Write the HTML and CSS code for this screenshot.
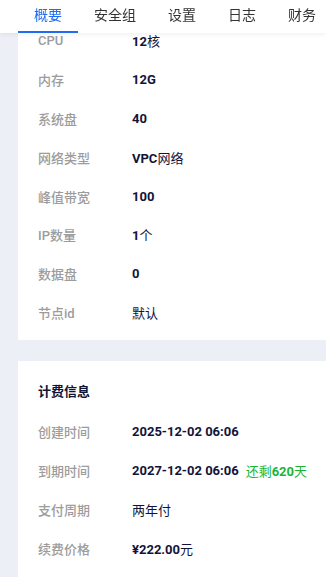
FILE: index.html
```
<!DOCTYPE html>
<html>
<head>
    <meta charset="UTF-8">
    <title>实例详情</title>
    <link rel="stylesheet" href="styles.css">
</head>
<body>
<div class="tabs">
    <a class="tab active">概要</a>
    <a class="tab">安全组</a>
    <a class="tab">设置</a>
    <a class="tab">日志</a>
    <a class="tab">财务</a>
</div>
<div class="main">
    <div class="card card-spec">
        <div class="row"><span class="label">CPU</span><span class="value">12<i>核</i></span></div>
        <div class="row"><span class="label">内存</span><span class="value">12G</span></div>
        <div class="row"><span class="label">系统盘</span><span class="value">40</span></div>
        <div class="row"><span class="label">网络类型</span><span class="value">VPC<i>网络</i></span></div>
        <div class="row"><span class="label">峰值带宽</span><span class="value">100</span></div>
        <div class="row"><span class="label">IP数量</span><span class="value">1<i>个</i></span></div>
        <div class="row"><span class="label">数据盘</span><span class="value">0</span></div>
        <div class="row"><span class="label">节点id</span><span class="value"><i>默认</i></span></div>
    </div>
    <div class="card card-bill">
        <div class="card-title">计费信息</div>
        <div class="row"><span class="label">创建时间</span><span class="value">2025-12-02 06:06</span></div>
        <div class="row"><span class="label">到期时间</span><span class="value">2027-12-02 06:06</span><span class="remain">还剩<b>620</b>天</span></div>
        <div class="row"><span class="label">支付周期</span><span class="value"><i>两年付</i></span></div>
        <div class="row"><span class="label">续费价格</span><span class="value">¥222.00<i>元</i></span></div>
    </div>
</div>
</body>
</html>
```
FILE: styles.css
```
* {
    margin: 0;
    padding: 0;
    box-sizing: border-box;
}

html, body {
    width: 100%;
    height: 100%;
    overflow: hidden;
}

body {
    background: #eceff6;
    font-family: Roboto, "Noto Sans CJK SC", sans-serif;
    font-size: 13px;
    color: #11143a;
}

.tabs {
    position: sticky;
    top: 0;
    z-index: 1;
    display: flex;
    height: 33px;
    padding-left: 18px;
    background: #fff;
    box-shadow: 0 2px 4px rgba(30, 40, 80, 0.06);
    white-space: nowrap;
}

.tab {
    flex-shrink: 0;
    padding: 0 16px;
    height: 33px;
    line-height: 31px;
    font-size: 14px;
    color: #333;
    border-bottom: 2px solid transparent;
}

.tab.active {
    color: #1f6cf3;
    border-bottom-color: #1f6cf3;
}

.main {
    padding-left: 18px;
}

.card {
    background: #fff;
    padding: 10px 20px;
}

.card-spec {
    margin-top: -22px;
    padding-bottom: 8px;
}

.card-bill {
    margin-top: 21px;
    padding-bottom: 30px;
}

.card-title {
    height: 41px;
    line-height: 41px;
    font-weight: bold;
    font-size: 13px;
}

.row {
    display: flex;
    align-items: center;
    height: 38.9px;
    white-space: nowrap;
}

.label {
    flex-shrink: 0;
    width: 94px;
    color: #9c9c9c;
    font-weight: 500;
}

.value {
    font-weight: bold;
}

.value i {
    font-style: normal;
    font-weight: normal;
}

.remain {
    margin-left: 7px;
    color: #1ab534;
}
```
